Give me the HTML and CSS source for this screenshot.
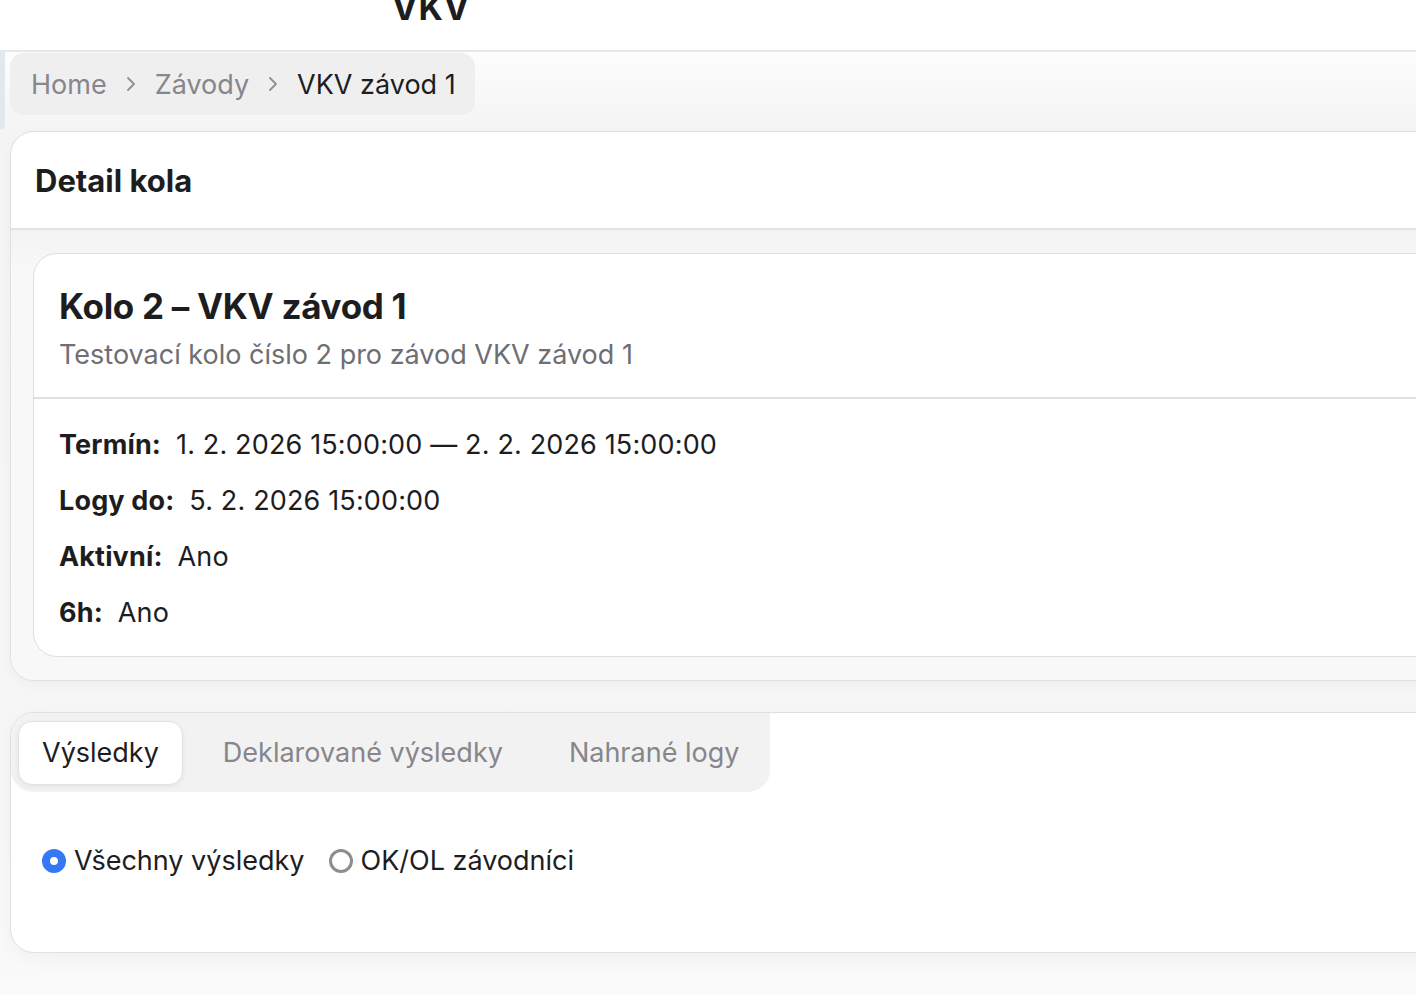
FILE: index.html
```html
<!DOCTYPE html>
<html lang="cs">
<head>
<meta charset="utf-8">
<title>Detail kola</title>
<link rel="stylesheet" href="styles.css">
</head>
<body>
<header class="topbar">
  <div class="brand">VKV</div>
</header>
<div class="layout">
  <aside class="side-edge"></aside>
  <main class="content">
    <nav class="breadcrumb">
      <span class="crumb">Home</span>
      <span class="sep"><svg width="14" height="20" viewBox="0 0 14 20"><path d="M4 4 L10 10 L4 16" fill="none" stroke="#8e8e93" stroke-width="1.8" stroke-linecap="round" stroke-linejoin="round"/></svg></span>
      <span class="crumb">Závody</span>
      <span class="sep"><svg width="14" height="20" viewBox="0 0 14 20"><path d="M4 4 L10 10 L4 16" fill="none" stroke="#8e8e93" stroke-width="1.8" stroke-linecap="round" stroke-linejoin="round"/></svg></span>
      <span class="crumb current">VKV závod 1</span>
    </nav>

    <section class="card">
      <div class="card-head">
        <h2 class="card-title">Detail kola</h2>
      </div>
      <div class="card-body">
        <div class="inner-card">
          <div class="inner-head">
            <h1 class="round-title">Kolo 2 – VKV závod 1</h1>
            <p class="round-sub">Testovací kolo číslo 2 pro závod VKV závod 1</p>
          </div>
          <dl class="facts">
            <div class="fact"><dt>Termín:</dt><dd>1. 2. 2026 15:00:00 — 2. 2. 2026 15:00:00</dd></div>
            <div class="fact"><dt>Logy do:</dt><dd>5. 2. 2026 15:00:00</dd></div>
            <div class="fact"><dt>Aktivní:</dt><dd>Ano</dd></div>
            <div class="fact"><dt>6h:</dt><dd>Ano</dd></div>
          </dl>
        </div>
      </div>
    </section>

    <section class="card tabs-card">
      <div class="tabs">
        <button class="tab active">Výsledky</button>
        <button class="tab">Deklarované výsledky</button>
        <button class="tab">Nahrané logy</button>
      </div>
      <div class="filters">
        <label class="radio"><span class="dot checked"></span>Všechny výsledky</label>
        <label class="radio"><span class="dot"></span>OK/OL závodníci</label>
      </div>
    </section>
  </main>
</div>
</body>
</html>
```

FILE: styles.css
```css
html, body {
  margin: 0;
  padding: 0;
  overflow: hidden;
}

body {
  font-family: Inter, "Noto Sans", "Liberation Sans", sans-serif;
  color: #1d1d1f;
  background: linear-gradient(180deg, #ffffff 0px, #fdfdfd 52px, #f4f4f4 130px, #f6f6f6 700px, #fafafa 994px);
  height: 994px;
}

.topbar {
  height: 50px;
  background: #ffffff;
  border-bottom: 2px solid #e6e6eb;
  overflow: hidden;
  position: relative;
}

.brand {
  font-size: 34px;
  font-weight: 700;
  letter-spacing: 1px;
  line-height: 34px;
  margin-top: -9px;
  padding-left: 392px;
  color: #1d1d1f;
}

.layout {
  display: flex;
  align-items: flex-start;
}

.side-edge {
  flex: 0 0 5px;
  height: 78px;
  background: #e3e8f0;
  border-bottom-right-radius: 5px;
}

.content {
  flex: 0 0 1500px;
  padding-left: 5px;
  padding-top: 1px;
}

.breadcrumb {
  display: inline-flex;
  align-items: center;
  height: 62px;
  padding: 0 19px 0 21px;
  background: #efefef;
  border-radius: 14px;
  font-size: 27px;
  box-sizing: border-box;
}

.crumb {
  color: #86868b;
}

.crumb.current {
  color: #1d1d1f;
}

.sep {
  display: inline-flex;
  margin: 0 17px 0 17px;
}

.card {
  margin-top: 16px;
  background: #ffffff;
  border: 1px solid #e0e0e0;
  border-radius: 24px;
  overflow: hidden;
  box-shadow: 0 4px 12px rgba(0, 0, 0, 0.03);
}

.card-head {
  height: 96px;
  display: flex;
  align-items: center;
  padding-left: 24px;
  border-bottom: 2px solid #e2e2e2;
}

.card-title {
  margin: 0;
  font-size: 31px;
  font-weight: 700;
  letter-spacing: 0;
}

.card-body {
  padding: 23px 0 23px 22px;
  background: linear-gradient(180deg, #f3f3f3 0px, #f8f8f8 40px, #f8f8f8 100%);
}

.inner-card {
  background: #ffffff;
  border: 1px solid #dedede;
  border-radius: 24px;
}

.inner-head {
  padding: 28px 25px 23px;
  border-bottom: 2px solid #e0e0e0;
}

.round-title {
  margin: 0;
  font-size: 35px;
  line-height: 48px;
  font-weight: 700;
  letter-spacing: -0.3px;
}

.round-sub {
  margin: 6px 0 0;
  font-size: 27px;
  line-height: 38px;
  color: #6e6e73;
}

.facts {
  margin: 0;
  padding: 17px 25px 16px;
}

.fact {
  display: flex;
  align-items: center;
  height: 56px;
  font-size: 27px;
  letter-spacing: 0.15px;
}

.fact dt {
  font-weight: 700;
  margin-right: 15px;
}

.fact dd {
  margin: 0;
}

.tabs-card {
  margin-top: 31px;
  box-shadow: 0 6px 20px rgba(0, 0, 0, 0.04);
}

.tabs {
  display: inline-flex;
  align-items: center;
  padding: 7px;
  background: #f2f2f2;
  border-bottom-right-radius: 22px;
  border-bottom-left-radius: 22px;
  box-sizing: border-box;
  height: 79px;
}

.tab {
  font-family: inherit;
  font-size: 27px;
  background: transparent;
  border: none;
  color: #86868b;
  height: 64px;
  padding: 0 33px;
  border-radius: 14px;
  cursor: pointer;
}

.tab:last-child {
  padding-right: 24px;
}

.tab.active {
  color: #1d1d1f;
  background: #ffffff;
  border: 1px solid #e2e2e2;
  padding: 0 23px;
  margin-right: 7px;
  box-shadow: 0 2px 5px rgba(0, 0, 0, 0.06);
}

.filters {
  display: flex;
  align-items: center;
  gap: 24px;
  padding: 52px 31px 74px;
}

.radio {
  display: inline-flex;
  align-items: center;
  gap: 8px;
  font-size: 27px;
  line-height: 34px;
  color: #1d1d1f;
}

.dot {
  width: 24px;
  height: 24px;
  border-radius: 50%;
  box-sizing: border-box;
  border: 3px solid #8e8e8e;
  background: #ffffff;
}

.dot.checked {
  border: 8px solid #3478f6;
  background: #ffffff;
}
```
